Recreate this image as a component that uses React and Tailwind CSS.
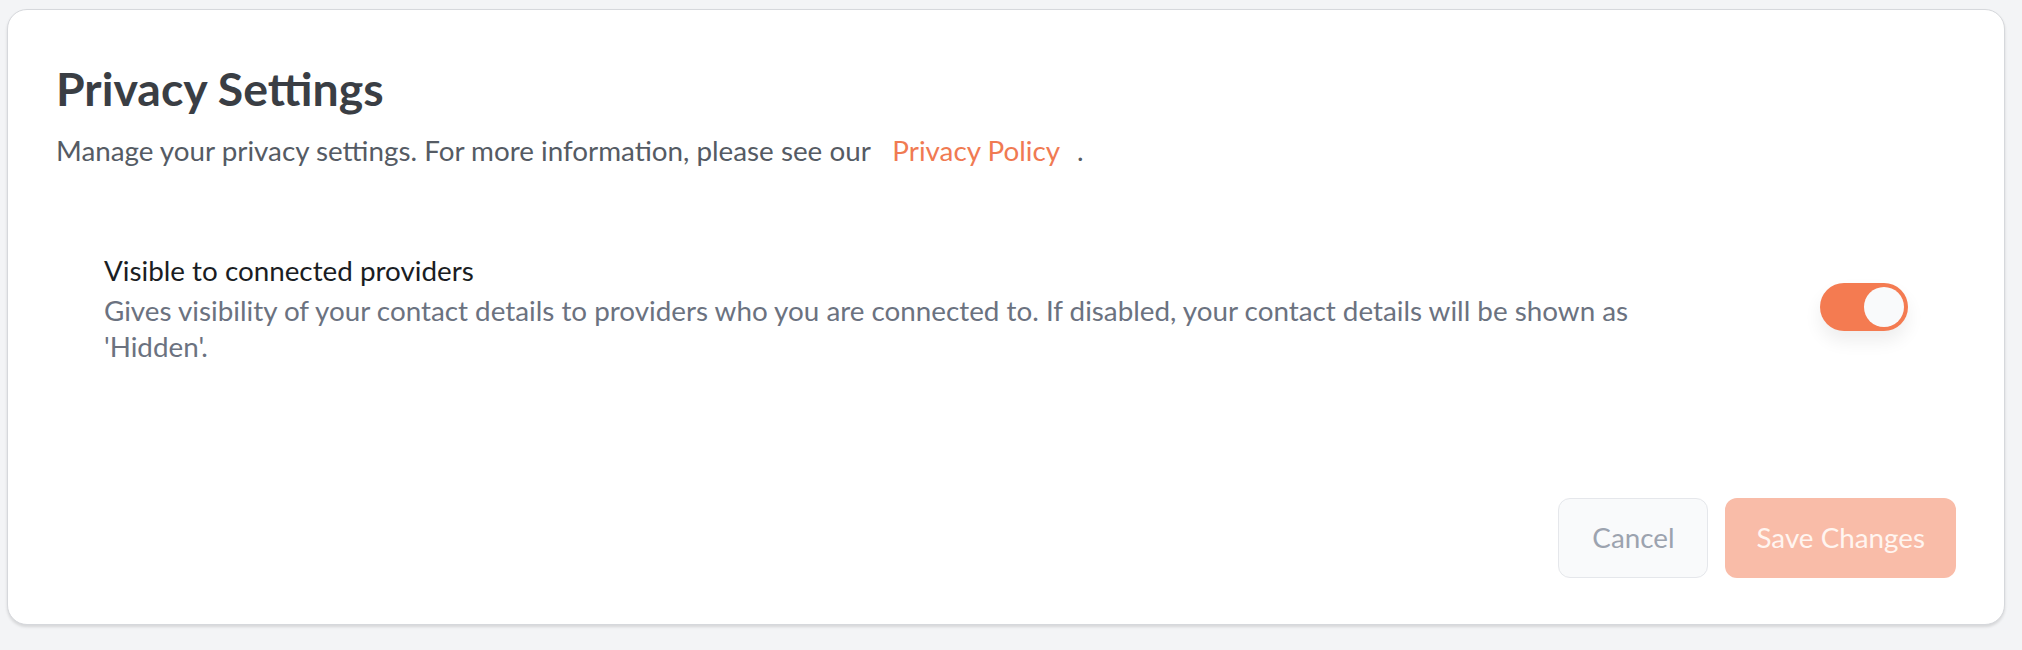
import React, { useState } from 'react';

const Toggle = ({ checked, onChange }) => (
  <button
    type="button"
    role="switch"
    aria-checked={checked}
    onClick={() => onChange(!checked)}
    className={`relative flex h-[48px] w-[88px] shrink-0 items-center rounded-full p-[4px] shadow-[0_10px_18px_rgba(0,0,0,0.07)] ${checked ? 'justify-end bg-[#f47b51]' : 'justify-start bg-[#e5e7eb]'}`}
  >
    <span className="block h-[40px] w-[40px] rounded-full bg-[#f9fafb]" />
  </button>
);

const App = () => {
  const [visible, setVisible] = useState(true);

  return (
    <div className="min-h-[650px] bg-[#f3f4f6] pl-[7px] pr-[17px] pt-[9px] font-['Lato','Liberation_Sans',sans-serif]">
      <div className="rounded-[20px] border border-[#d6d8dc] bg-white px-12 pb-[46px] pt-12 shadow-[0_2px_3px_rgba(0,0,0,0.12)]">
        <h2 className="text-[46.4px] font-bold leading-[60px] text-[#3a3e44]">Privacy Settings</h2>
        <p className="mt-[11px] text-[27.8px] leading-[44px] text-[#555b64]">
          Manage your privacy settings. For more information, please see our{' '}
          <a href="#" className="pl-[15px] pr-[17px] text-[#f07a52]">Privacy Policy</a>.
        </p>

        <div className="mt-[76px] flex items-center justify-between gap-12 px-12">
          <div className="max-w-[1535px]">
            <h3 className="text-[27.8px] leading-[44px] text-[#1a1d23]">Visible to connected providers</h3>
            <p className="text-[27.8px] leading-[36px] text-[#6b7280]">
              Gives visibility of your contact details to providers who you are connected to. If disabled, your contact details will be shown as 'Hidden'.
            </p>
          </div>
          <Toggle checked={visible} onChange={setVisible} />
        </div>

        <div className="mt-[133px] flex justify-end gap-[17px]">
          <button className="h-[80px] rounded-[12px] border border-[#e5e7eb] bg-[#f9fafb] px-[33px] text-[27.8px] text-[#9ca3af]">
            Cancel
          </button>
          <button disabled className="h-[80px] rounded-[12px] bg-[#f9bca8] px-[31px] text-[27.8px] text-[#fff5f0]">
            Save Changes
          </button>
        </div>
      </div>
    </div>
  );
};

export default App;
